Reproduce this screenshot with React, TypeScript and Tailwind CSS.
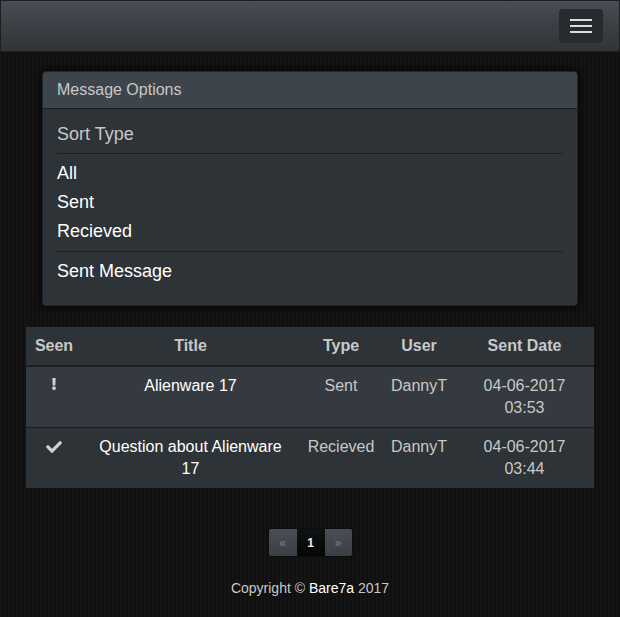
import React from "react";
import { FaCheck, FaExclamation } from "react-icons/fa";

export default function App() {
  const font = { fontFamily: '"Liberation Sans", Arial, sans-serif' };
  return (
    <div
      style={font}
      className="min-h-[617px] w-[620px] bg-[#131313] bg-[repeating-linear-gradient(90deg,#141414_0px,#141414_2px,#101010_2px,#101010_4px)] text-[#c8c8c8]"
    >
      <nav className="h-[52px] border border-[#1c1e22] bg-gradient-to-b from-[#484e55] via-[#3a3f44] to-[#313539] flex justify-end items-start pr-[16px] pt-[8px]">
        <button className="w-[44px] h-[34px] rounded-[4px] bg-[#272b30] flex flex-col items-center justify-center gap-[4px]">
          <span className="block w-[22px] h-[2px] bg-[#dcdcdc]" />
          <span className="block w-[22px] h-[2px] bg-[#dcdcdc]" />
          <span className="block w-[22px] h-[2px] bg-[#dcdcdc]" />
        </button>
      </nav>

      <div className="px-[26px] pt-[19px]">
        <div className="mx-[16px] rounded-[4px] bg-[#2e3338] shadow-[0_0_6px_2px_rgba(0,0,0,0.6)] border border-[#23272b]">
          <div className="h-[37px] bg-[#3e444c] border-b border-[#1c1e22] rounded-t-[4px] px-[14px] flex items-center text-[16px] text-[#c8c8c8]">
            Message Options
          </div>
          <div className="px-[14px] pt-[15px] pb-[19px]">
            <div className="text-[18px] leading-[20px] text-[#c8c8c8]">Sort Type</div>
            <div className="mt-[9px] h-px bg-[#1c1e22]" />
            <div className="mt-[5px] text-[18px] leading-[29px] text-white">
              <div>All</div>
              <div>Sent</div>
              <div>Recieved</div>
            </div>
            <div className="mt-[5px] h-px bg-[#1c1e22]" />
            <div className="mt-[5px] text-[18px] leading-[29px] text-white">Sent Message</div>
          </div>
        </div>

        <table className="mt-[21px] w-[568px] table-fixed border-collapse text-[16px] leading-[22px]">
          <thead>
            <tr className="bg-[#2e3338] border-b-2 border-[#1c1e22]">
              <th className="w-[56px] px-[8px] py-[8px] text-center font-bold text-[#c8c8c8]">Seen</th>
              <th className="w-[217px] px-[8px] py-[8px] text-center font-bold text-[#c8c8c8]">Title</th>
              <th className="w-[84px] px-[8px] py-[8px] text-center font-bold text-[#c8c8c8]">Type</th>
              <th className="w-[72px] px-[8px] py-[8px] text-center font-bold text-[#c8c8c8]">User</th>
              <th className="w-[139px] px-[8px] py-[8px] text-center font-bold text-[#c8c8c8]">Sent Date</th>
            </tr>
          </thead>
          <tbody>
            <tr className="bg-[#353a41] border-b border-[#1c1e22]">
              <td className="px-[8px] py-[8px] align-top text-center">
                <div className="h-[22px] flex justify-center items-start pt-[3px]">
                  <FaExclamation size={12} color="#d0d0d0" />
                </div>
              </td>
              <td className="px-[8px] py-[8px] align-top text-center text-white">Alienware 17</td>
              <td className="px-[8px] py-[8px] align-top text-center">Sent</td>
              <td className="px-[8px] py-[8px] align-top text-center">DannyT</td>
              <td className="px-[8px] py-[8px] align-top text-center">
                04-06-2017
                <br />
                03:53
              </td>
            </tr>
            <tr className="bg-[#2e3338]">
              <td className="px-[8px] py-[8px] align-top text-center">
                <div className="h-[22px] flex justify-center items-start pt-[3px]">
                  <FaCheck size={16} color="#d0d0d0" />
                </div>
              </td>
              <td className="px-[8px] py-[8px] align-top text-center text-white">Question about Alienware 17</td>
              <td className="px-[8px] py-[8px] align-top text-center">Recieved</td>
              <td className="px-[8px] py-[8px] align-top text-center">DannyT</td>
              <td className="px-[8px] py-[8px] align-top text-center">
                04-06-2017
                <br />
                03:44
              </td>
            </tr>
          </tbody>
        </table>

        <div className="mt-[40px] flex justify-center">
          <div className="flex h-[29px] rounded-[3px] border border-[#0c0c0c] overflow-hidden text-[12px]">
            <span className="w-[28px] flex items-center justify-center bg-gradient-to-b from-[#484e55] to-[#3a3f44] text-[#7a8288]">«</span>
            <span className="w-[28px] flex items-center justify-center bg-gradient-to-b from-[#101112] to-[#060606] text-[#e6f0ff] font-bold">1</span>
            <span className="w-[27px] flex items-center justify-center bg-gradient-to-b from-[#484e55] to-[#3a3f44] text-[#7a8288]">»</span>
          </div>
        </div>

        <div className="mt-[21px] text-center text-[14px] leading-[20px] text-[#c8c8c8]">
          Copyright © <span className="text-white">Bare7a</span> 2017
        </div>
      </div>
    </div>
  );
}
